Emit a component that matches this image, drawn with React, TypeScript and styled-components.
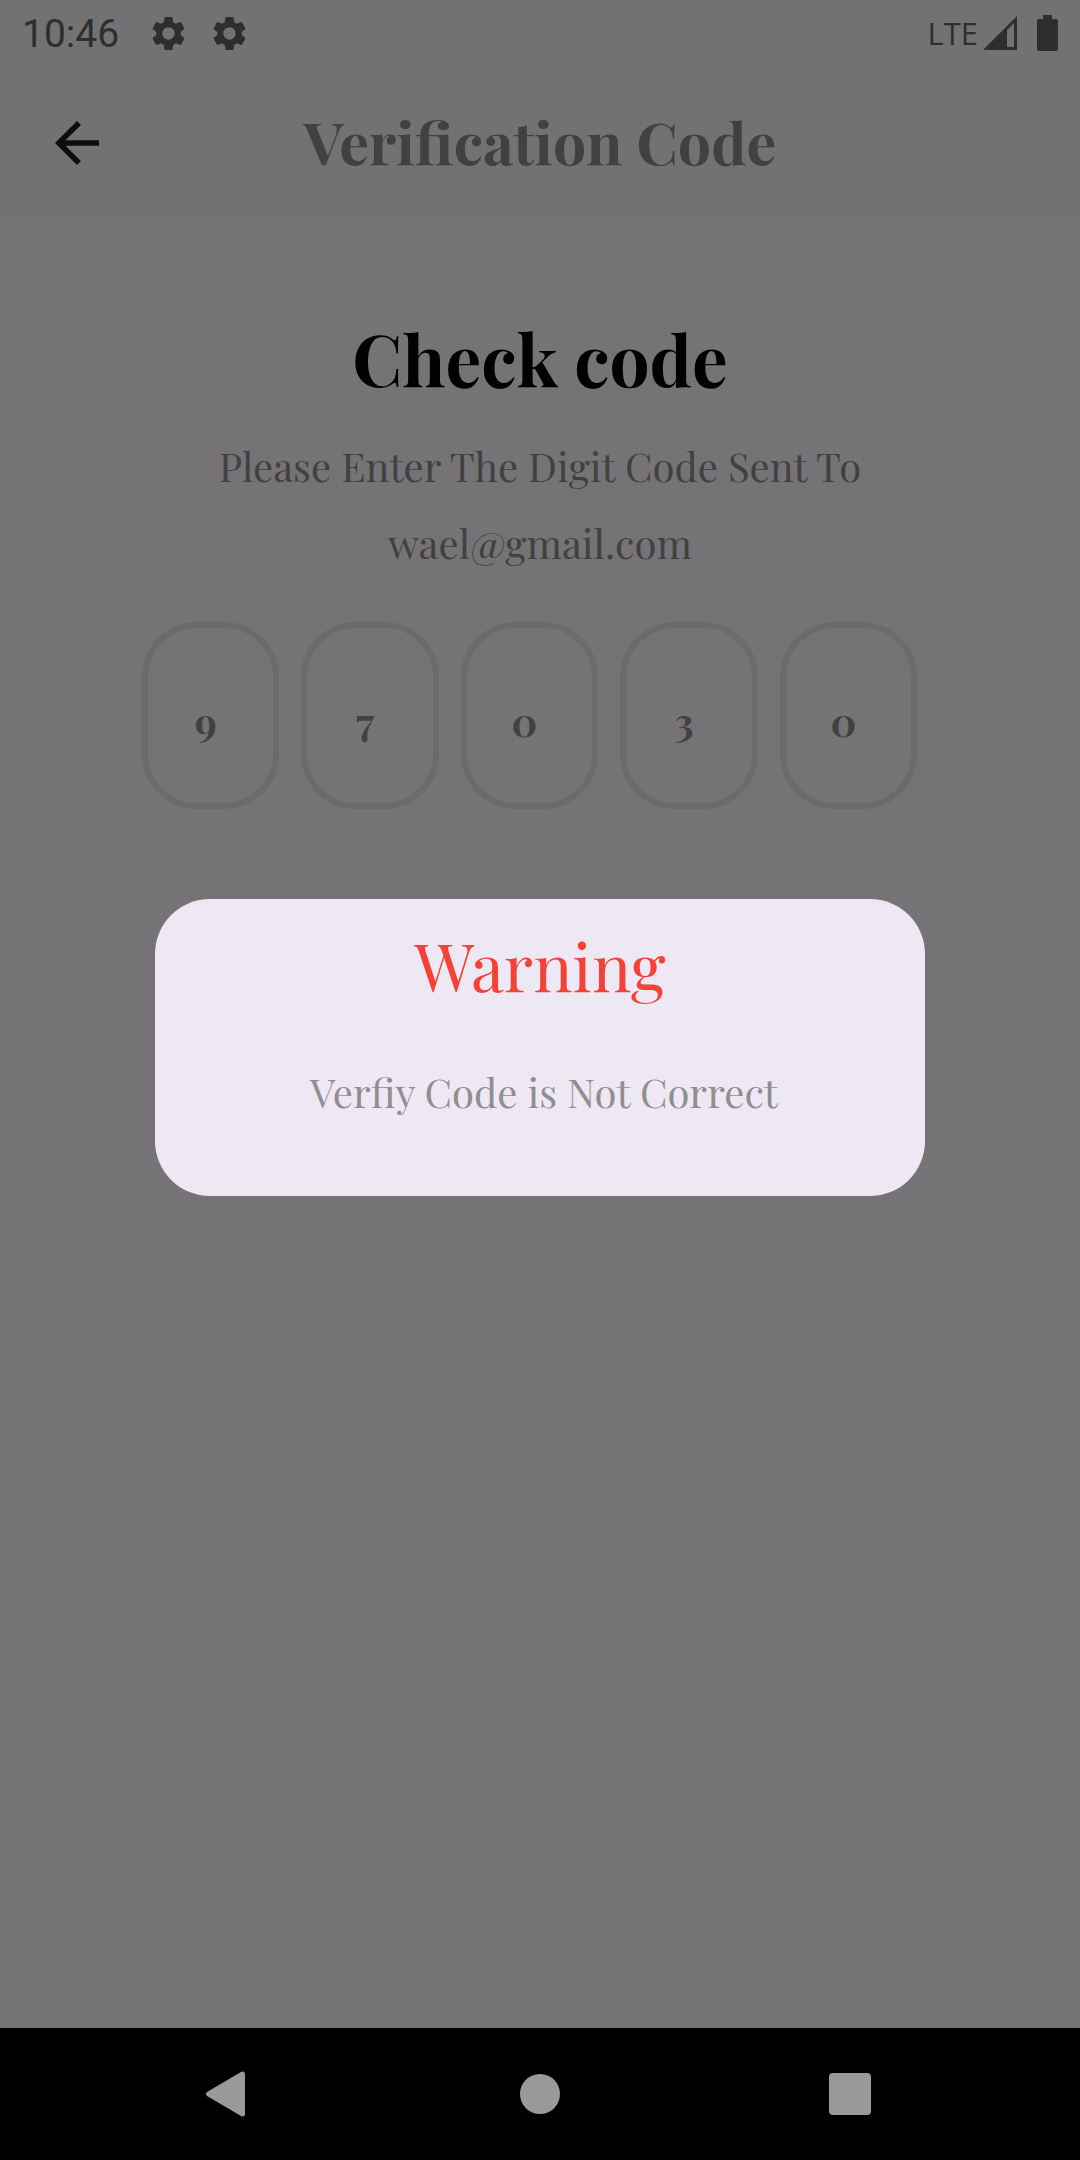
import React, { useState } from "react";
import styled, { createGlobalStyle } from "styled-components";
import { MdArrowBack, MdSettings } from "react-icons/md";

const GlobalStyle = createGlobalStyle`
  * {
    box-sizing: border-box;
  }
  body {
    margin: 0;
    background: #757376;
  }
`;

const serif = `"Playfair Display", "Liberation Serif", serif`;

const Screen = styled.div`
  position: relative;
  display: flex;
  flex-direction: column;
  min-height: 100vh;
  background: #757376;
  color: #414141;
  font-family: ${serif};
`;

const StatusBar = styled.div`
  display: flex;
  align-items: center;
  justify-content: space-between;
  height: 66px;
  padding: 0 21px 0 22px;
  background: #727274;
  color: #2e2e2e;
  font-family: Roboto, sans-serif;
`;

const StatusGroup = styled.div<{ $gap: number }>`
  display: flex;
  align-items: center;
  gap: ${(p) => p.$gap}px;
`;

const Clock = styled.time`
  margin-right: 9px;
  padding-top: 3px;
  font-size: 39px;
  line-height: 63px;
`;

const Network = styled.span`
  font-family: "Open Sans", sans-serif;
  font-size: 31px;
  line-height: 66px;
`;

const AppBar = styled.header`
  display: grid;
  grid-template-columns: 110px 1fr 110px;
  align-items: center;
  height: 154px;
  padding: 0 22px;
  background: #727274;
`;

const IconButton = styled.button`
  display: flex;
  align-items: center;
  justify-content: center;
  width: 110px;
  height: 110px;
  padding: 0;
  border: 0;
  background: none;
  color: #0d0d0f;
  cursor: pointer;
`;

const Title = styled.h1`
  margin: 0;
  padding-bottom: 4px;
  font-size: 59px;
  line-height: 100px;
  font-weight: 700;
  text-align: center;
`;

const Content = styled.main`
  flex: 1;
  padding: 88px 0 0;
`;

const Heading = styled.h2`
  margin: 0 0 19px;
  color: #000;
  font-size: 71px;
  line-height: 100px;
  font-weight: 700;
  text-align: center;
`;

const Text = styled.p`
  margin: 0;
  font-size: 40px;
  line-height: 77px;
  text-align: center;
`;

const CodeRow = styled.form`
  display: grid;
  grid-template-columns: repeat(5, 1fr);
  gap: 22px;
  margin-top: 41px;
  padding: 0 163px 0 142px;
`;

const Digit = styled.input`
  width: 100%;
  min-width: 0;
  height: 187px;
  padding: 10px 10px 0 0;
  border: 6px solid #6b6b6b;
  border-radius: 55px;
  outline: none;
  background: transparent;
  color: #414141;
  font-family: ${serif};
  font-size: 40px;
  font-weight: 700;
  text-align: center;
`;

const Overlay = styled.div`
  position: absolute;
  inset: 66px 0 132px;
  display: flex;
  align-items: center;
  justify-content: center;
  padding: 0 155px;
`;

const Dialog = styled.section`
  flex: 1;
  padding: 19px 22px 66px;
  border-radius: 55px;
  background: #eee8f4;
`;

const DialogTitle = styled.h2`
  margin: 0 0 41px;
  color: #f44336;
  font-size: 66px;
  line-height: 94px;
  font-weight: 400;
  text-align: center;
`;

const DialogText = styled(Text)`
  padding-left: 8px;
  color: #8f8f8f;
`;

const NavBar = styled.nav`
  display: flex;
  align-items: center;
  justify-content: center;
  gap: 200px;
  height: 132px;
  background: #000;
`;

const NavButton = styled(IconButton)`
  color: #999;
`;

export default function App() {
  const [code, setCode] = useState(["9", "7", "0", "3", "0"]);

  const change = (index: number, value: string) =>
    setCode(code.map((d, i) => (i === index ? value : d)));

  return (
    <Screen>
      <GlobalStyle />
      <StatusBar>
        <StatusGroup $gap={20}>
          <Clock>10:46</Clock>
          <MdSettings size={41} />
          <MdSettings size={41} />
        </StatusGroup>
        <StatusGroup $gap={5}>
          <Network>LTE</Network>
          <svg width="35" height="36" viewBox="0 0 35 36" aria-hidden="true">
            <path
              fill="currentColor"
              fillRule="evenodd"
              d="M34 1V35H0ZM24 15V32H31V8Z"
            />
          </svg>
          <svg width="36" height="38" viewBox="0 0 36 38" aria-hidden="true">
            <path
              fill="currentColor"
              d="M20 1h9v4h4q2 0 2 2v28q0 2-2 2H16q-2 0-2-2V7q0-2 2-2h4Z"
            />
          </svg>
        </StatusGroup>
      </StatusBar>

      <AppBar>
        <IconButton type="button" aria-label="Back">
          <MdArrowBack size={66} />
        </IconButton>
        <Title>Verification Code</Title>
      </AppBar>

      <Content>
        <Heading>Check code</Heading>
        <Text>Please Enter The Digit Code Sent To</Text>
        <Text>wael@gmail.com</Text>
        <CodeRow>
          {code.map((digit, i) => (
            <Digit
              key={i}
              aria-label={`Digit ${i + 1}`}
              inputMode="numeric"
              maxLength={1}
              value={digit}
              onChange={(e) => change(i, e.target.value)}
            />
          ))}
        </CodeRow>
      </Content>

      <NavBar>
        <NavButton type="button" aria-label="Back">
          <svg width="48" height="46" viewBox="0 0 48 46" aria-hidden="true">
            <path
              fill="currentColor"
              d="M35 1Q39-1 39 4V42Q39 47 35 45L1 25Q-1 23 1 21Z"
            />
          </svg>
        </NavButton>
        <NavButton type="button" aria-label="Home">
          <svg width="42" height="42" viewBox="0 0 42 42" aria-hidden="true">
            <circle cx="21" cy="21" r="20" fill="currentColor" />
          </svg>
        </NavButton>
        <NavButton type="button" aria-label="Recent apps">
          <svg width="42" height="42" viewBox="0 0 42 42" aria-hidden="true">
            <rect width="42" height="42" rx="4" fill="currentColor" />
          </svg>
        </NavButton>
      </NavBar>

      <Overlay>
        <Dialog role="alertdialog" aria-labelledby="warning-title">
          <DialogTitle id="warning-title">Warning</DialogTitle>
          <DialogText>Verfiy Code is Not Correct</DialogText>
        </Dialog>
      </Overlay>
    </Screen>
  );
}
